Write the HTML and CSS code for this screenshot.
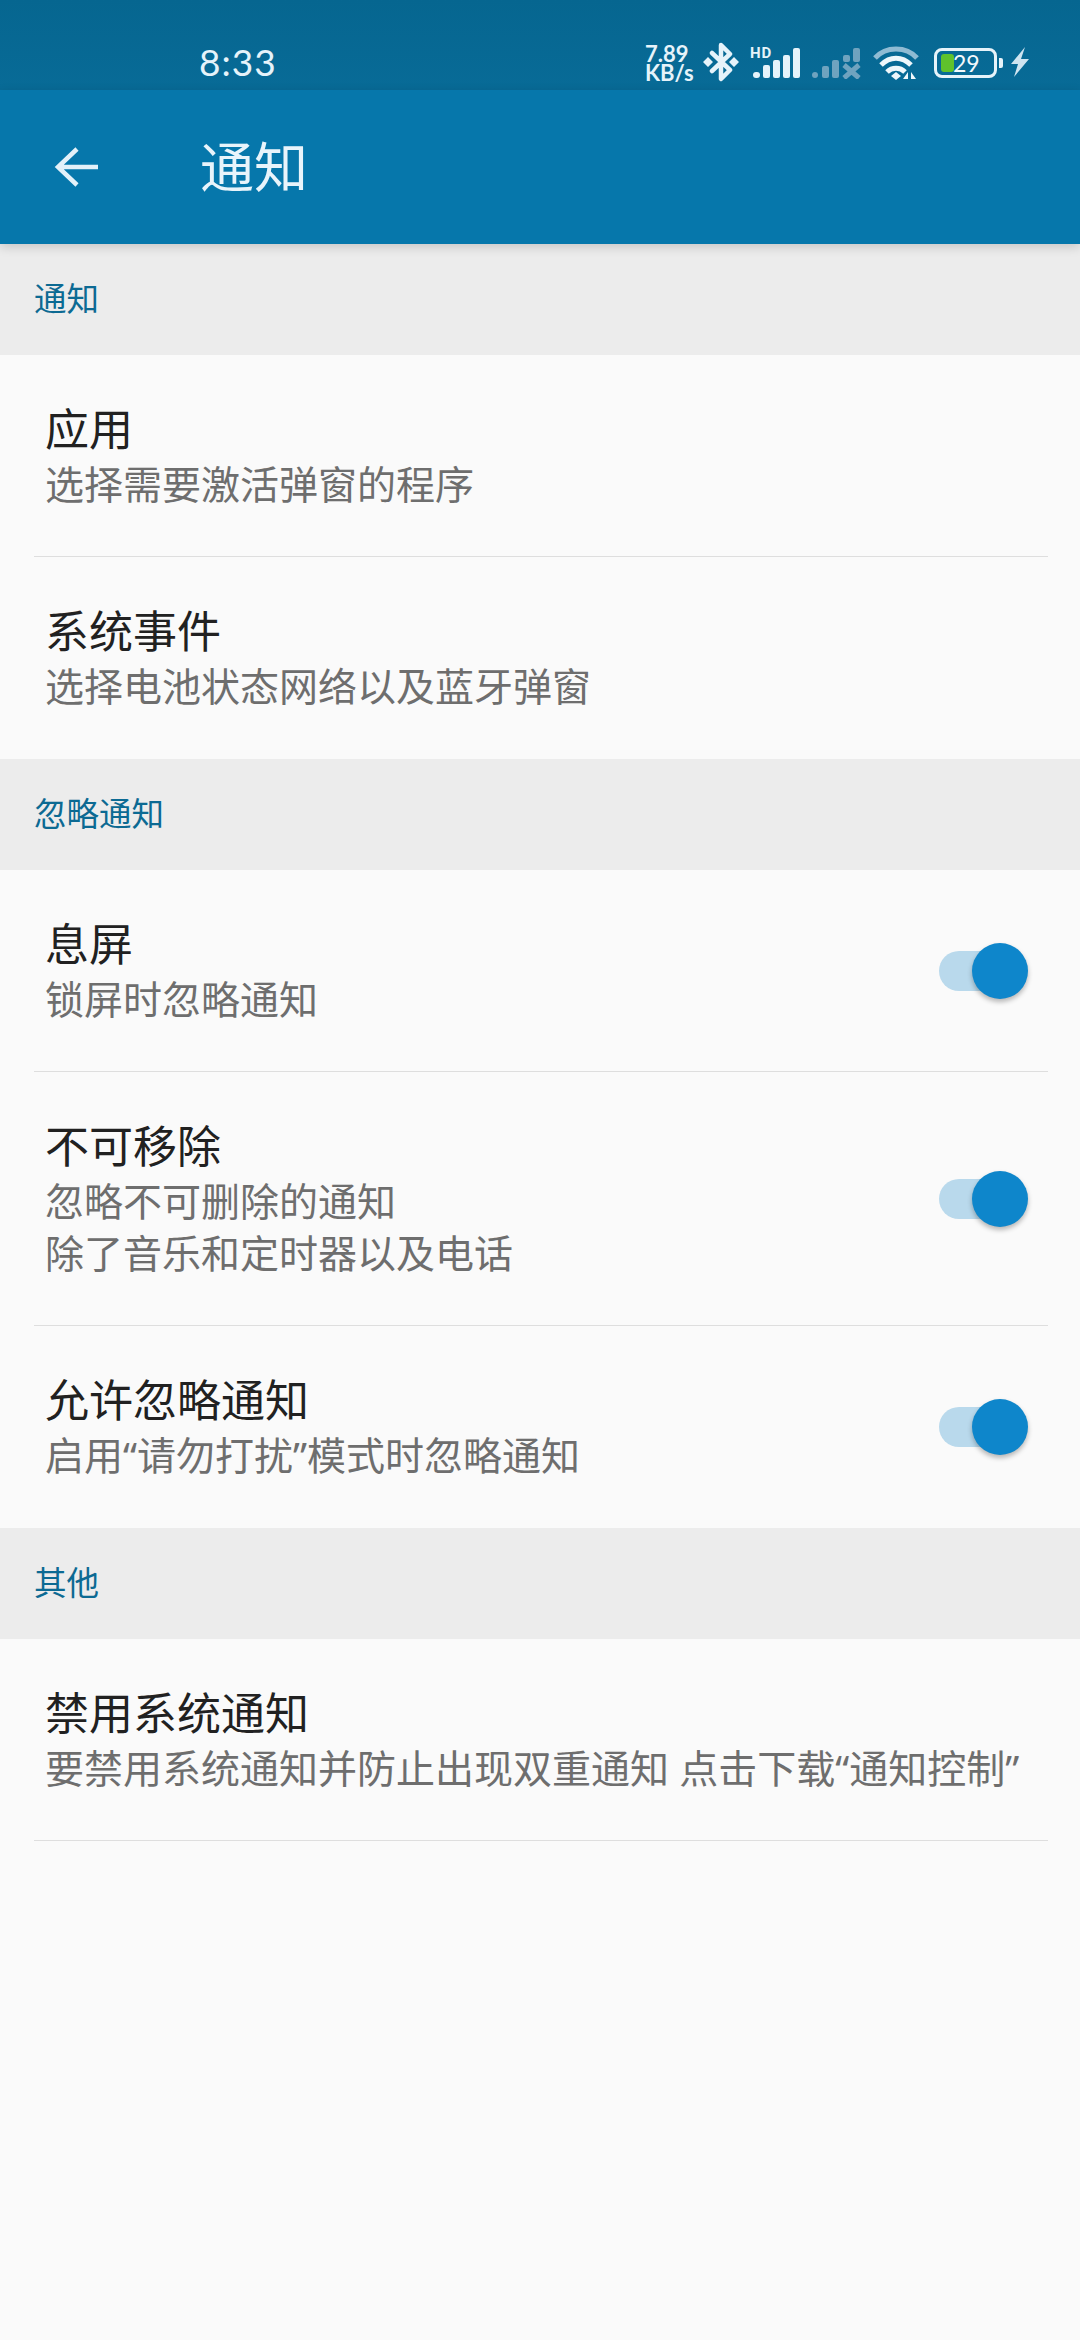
FILE: index.html
```html
<!DOCTYPE html>
<html lang="zh-CN">
<head>
    <meta charset="UTF-8">
    <meta name="viewport" content="width=device-width, initial-scale=1.0">
    <title>通知</title>
    <link rel="stylesheet" href="styles.css">
</head>
<body>
    <div class="status-bar">
        <span class="clock">8:33</span>
        <div class="status-icons">
            <div class="net-speed"><span>7.89</span><span>KB/s</span></div>
            <svg class="ic-bt" width="36" height="40" viewBox="0 0 36 40">
                <path d="M9 11 L27 28 L18 37 V3 L27 12 L9 29" fill="none" stroke="#e6f3fa" stroke-width="4.5" stroke-linejoin="round" stroke-linecap="round"/>
                <path d="M5 15 L10 20 L5 25 L0 20 Z M31 15 L36 20 L31 25 L26 20 Z" fill="#e6f3fa"/>
            </svg>
            <svg class="ic-signal" width="50" height="38" viewBox="0 -6 50 38">
                <text x="0" y="11" class="hd-text">HD</text>
                <rect x="3" y="25" width="7" height="6" rx="3" fill="#e6f3fa"/>
                <rect x="13" y="18" width="7" height="13" rx="2" fill="#e6f3fa"/>
                <rect x="23" y="13" width="7" height="18" rx="2" fill="#e6f3fa"/>
                <rect x="33" y="8" width="7" height="23" rx="2" fill="#e6f3fa"/>
                <rect x="43" y="1" width="7" height="30" rx="2" fill="#e6f3fa"/>
            </svg>
            <svg class="ic-signal2" width="50" height="32" viewBox="0 0 50 32">
                <g fill="#6fa3bf">
                    <rect x="0" y="25" width="6" height="6" rx="3"/>
                    <rect x="10" y="19" width="7" height="12" rx="2"/>
                    <rect x="20" y="13" width="7" height="18" rx="2"/>
                    <rect x="31" y="8" width="7" height="7" rx="2"/>
                    <rect x="41" y="1" width="7" height="14" rx="2"/>
                </g>
                <path d="M32 18 L47 31 M47 18 L32 31" stroke="#6fa3bf" stroke-width="5"/>
            </svg>
            <svg class="ic-wifi" width="48" height="36" viewBox="0 0 48 36">
                <path d="M3 12 C14 0 34 0 45 12" fill="none" stroke="#8fbbd3" stroke-width="5"/>
                <path d="M9 19 C18 10 30 10 39 19" fill="none" stroke="#eef7fb" stroke-width="5"/>
                <path d="M15 26 C20 21 28 21 33 26" fill="none" stroke="#eef7fb" stroke-width="5"/>
                <path d="M19 30 L24 26 L29 30 L24 34 Z" fill="#eef7fb"/>
                <path d="M36 26 V33 H31 Z M39 26 L44 33 H39 Z" fill="#eef7fb"/>
            </svg>
            <div class="battery">
                <div class="battery-body">
                    <span class="battery-fill"></span>
                    <span class="battery-num">29</span>
                </div>
                <span class="battery-tip"></span>
            </div>
            <svg class="ic-bolt" width="18" height="30" viewBox="0 0 18 30">
                <path d="M14 0 L0 17 H7 L3 30 L18 12 H10 Z" fill="#cfe4f0"/>
            </svg>
        </div>
    </div>

    <div class="app-bar">
        <svg class="back" width="48" height="48" viewBox="0 0 48 48">
            <path d="M49 24 H8 M27 6 L8 24 L27 42" fill="none" stroke="#e3f1f9" stroke-width="4.5"/>
        </svg>
        <h1>通知</h1>
    </div>

    <div class="section-head">通知</div>
    <div class="row">
        <div class="row-text">
            <div class="row-title">应用</div>
            <div class="row-sub">选择需要激活弹窗的程序</div>
        </div>
    </div>
    <div class="row no-line">
        <div class="row-text">
            <div class="row-title">系统事件</div>
            <div class="row-sub">选择电池状态网络以及蓝牙弹窗</div>
        </div>
    </div>

    <div class="section-head">忽略通知</div>
    <div class="row">
        <div class="row-text">
            <div class="row-title">息屏</div>
            <div class="row-sub">锁屏时忽略通知</div>
        </div>
        <div class="toggle"><span class="toggle-thumb"></span></div>
    </div>
    <div class="row">
        <div class="row-text">
            <div class="row-title">不可移除</div>
            <div class="row-sub">忽略不可删除的通知<br>除了音乐和定时器以及电话</div>
        </div>
        <div class="toggle"><span class="toggle-thumb"></span></div>
    </div>
    <div class="row no-line">
        <div class="row-text">
            <div class="row-title">允许忽略通知</div>
            <div class="row-sub">启用“请勿打扰”模式时忽略通知</div>
        </div>
        <div class="toggle"><span class="toggle-thumb"></span></div>
    </div>

    <div class="section-head">其他</div>
    <div class="row">
        <div class="row-text">
            <div class="row-title">禁用系统通知</div>
            <div class="row-sub">要禁用系统通知并防止出现双重通知 点击下载“通知控制”</div>
        </div>
    </div>
</body>
</html>
```

FILE: styles.css
```css
body {
    font-family: "Noto Sans CJK SC", "Noto Sans", sans-serif;
    background-color: #fafafa;
    margin: 0;
    width: 1080px;
    height: 2340px;
    overflow: hidden;
}
.status-bar {
    height: 90px;
    box-sizing: border-box;
    background: linear-gradient(#066690, #086b97);
    display: flex;
    align-items: flex-start;
    justify-content: space-between;
    padding: 41px 51px 0 199px;
    color: #e6f3fa;
}
.clock {
    font-family: Lato, Roboto, sans-serif;
    font-size: 37px;
    line-height: 42px;
    letter-spacing: 1px;
}
.status-icons {
    display: flex;
    align-items: flex-start;
}
.net-speed {
    display: flex;
    flex-direction: column;
    font-family: Lato, Roboto, sans-serif;
    font-weight: 700;
    font-size: 22px;
    line-height: 19px;
    width: 58px;
    margin-top: 3px;
}
.ic-bt {
    margin-top: 1px;
    margin-right: 11px;
}
.ic-signal {
    margin: 0 12px 0 0;
}
.hd-text {
    font-family: Roboto, sans-serif;
    font-weight: 700;
    font-size: 15px;
    letter-spacing: 1px;
    fill: #e6f3fa;
}
.ic-signal2 {
    margin: 6px 10px 0 0;
}
.ic-wifi {
    margin: 5px 14px 0 0;
}
.battery {
    display: flex;
    align-items: center;
    margin: 7px 8px 0 0;
}
.battery-body {
    width: 63px;
    height: 30px;
    box-sizing: border-box;
    border: 3px solid #e6f3fa;
    border-radius: 8px;
    display: flex;
    align-items: center;
    padding-left: 4px;
}
.battery-fill {
    width: 13px;
    height: 18px;
    background: #5fc22c;
    border-radius: 3px;
}
.battery-num {
    font-family: Lato, Roboto, sans-serif;
    font-size: 23px;
    line-height: 24px;
    color: #f2f9fc;
    margin-left: -1px;
}
.battery-tip {
    width: 4px;
    height: 10px;
    background: #e6f3fa;
    border-radius: 0 2px 2px 0;
    margin-left: 2px;
}
.ic-bolt {
    margin-top: 6px;
}
.app-bar {
    height: 154px;
    background: #0677ab;
    display: flex;
    align-items: center;
    position: relative;
    box-shadow: 0 3px 10px rgba(0, 0, 0, 0.16);
    padding-left: 50px;
    color: #e8f4fb;
}
.back {
    margin-right: 102px;
}
h1 {
    margin: 0 0 4px;
    font-size: 54px;
    font-weight: 400;
    line-height: 60px;
}
.section-head {
    height: 111px;
    box-sizing: border-box;
    background: #ececec;
    color: #0c6a93;
    font-size: 32.5px;
    line-height: 105px;
    padding-left: 34px;
}
.row {
    margin: 0 32px 0 34px;
    padding: 42px 0 46px 11px;
    border-bottom: 1px solid #dedede;
    display: flex;
    align-items: center;
    justify-content: space-between;
}
.row.no-line {
    border-bottom: none;
    padding-bottom: 47px;
}
.row-title {
    font-size: 44px;
    line-height: 61px;
    color: #212121;
}
.row-sub {
    font-family: "Noto Sans", "Noto Sans CJK SC", sans-serif;
    font-size: 39px;
    line-height: 52px;
    color: #6e6e6e;
    white-space: nowrap;
}
.toggle {
    width: 62px;
    height: 40px;
    background: #b9d9ec;
    border-radius: 20px;
    position: relative;
    margin: 5px 47px 0 0;
}
.toggle-thumb {
    position: absolute;
    left: 33px;
    top: -8px;
    width: 56px;
    height: 56px;
    border-radius: 50%;
    background: #0e86cb;
    box-shadow: 0 3px 5px rgba(0, 0, 0, 0.28);
}
```
